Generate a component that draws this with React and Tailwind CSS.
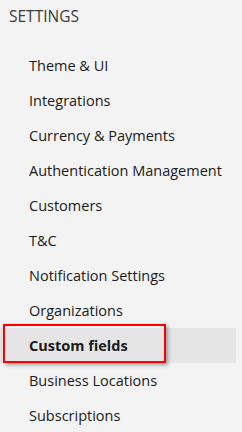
import React from "react";

const items = [
  "Theme & UI",
  "Integrations",
  "Currency & Payments",
  "Authentication Management",
  "Customers",
  "T&C",
  "Notification Settings",
  "Organizations",
  "Custom fields",
  "Business Locations",
  "Subscriptions",
];

export default function App() {
  const active = "Custom fields";

  return (
    <div className="w-[242px] h-[432px] overflow-hidden bg-[#f3f3f3] font-['Open_Sans',sans-serif] text-[#1a1a1a]">
      {/* Header */}
      <div className="h-[48px] pl-[9px] pt-[5px]">
        <h2 className="text-[15.5px] leading-[22px] text-[#3a3a3a] uppercase">Settings</h2>
      </div>

      {/* Menu */}
      <ul className="w-[236px]">
        {items.map((item) => (
          <li
            key={item}
            className={
              item === active
                ? "relative h-[35px] leading-[35px] pl-[29px] text-[14.5px] font-bold bg-[#e5e5e5]"
                : "h-[35px] leading-[35px] pl-[29px] text-[14.5px]"
            }
          >
            {item}
            {item === active && (
              <span className="absolute left-[3px] top-[-4px] w-[163px] h-[39px] border-2 border-[#ff0000] shadow-[2px_2px_4px_rgba(0,0,0,0.35)] pointer-events-none"></span>
            )}
          </li>
        ))}
      </ul>
    </div>
  );
}
